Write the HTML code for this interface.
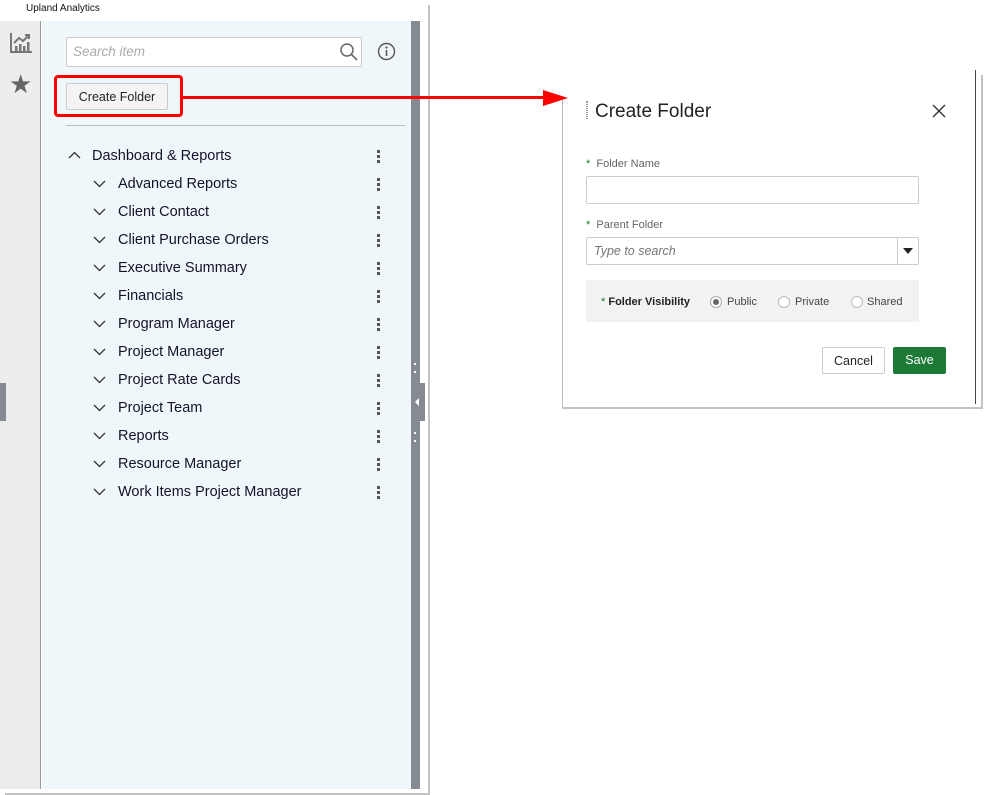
<!DOCTYPE html>
<html><head><meta charset="utf-8"><style>
*{box-sizing:border-box;margin:0;padding:0}
body{width:994px;height:795px;background:#fff;position:relative;overflow:hidden;font-family:"Liberation Sans",sans-serif;color:#222}
.a{position:absolute}
.row{position:absolute;left:0;width:370px;height:28px;font-size:14.5px;color:#141428}
.row .chev{position:absolute;top:6px}
.row .t{position:absolute;top:7px}
.dots{position:absolute;left:311px;top:9px;width:3px}
.dots i{display:block;width:3px;height:3px;background:#555;margin-bottom:2px}
</style></head><body>
<div class="a" style="left:26px;top:3px;font-size:10px;color:#111">Upland Analytics</div>
<div class="a" style="left:428px;top:5px;width:2px;height:790px;background:#c4c4c4"></div>
<div class="a" style="left:5px;top:793px;width:425px;height:2px;background:#c4c4c4"></div>
<div class="a" style="left:0;top:21px;width:41px;height:768px;background:#ededed;border-right:1px solid #999"></div>
<svg class="a" style="left:10px;top:32px" width="23" height="22" viewBox="0 0 23 22"><path d="M1 1V20H22" stroke="#777" stroke-width="2" fill="none"/><rect x="5" y="14" width="2.5" height="5" fill="#777"/><rect x="9" y="12" width="2.5" height="7" fill="#777"/><rect x="13" y="14" width="2.5" height="5" fill="#777"/><rect x="17" y="10" width="2.5" height="9" fill="#777"/><path d="M4 11L9 6L13 9L19 3M15 3H19V7" stroke="#777" stroke-width="2" fill="none"/></svg>
<div class="a" style="left:9px;top:69px;font-size:26px;color:#666;line-height:30px">★</div>
<div class="a" style="left:0;top:383px;width:6px;height:38px;background:#868b93"></div>
<div class="a" style="left:42px;top:21px;width:369px;height:768px;background:#f0f7fb"></div>
<div class="a" style="left:411px;top:21px;width:9px;height:768px;background:#868b93"></div>
<div class="a" style="left:411px;top:383px;width:14px;height:38px;background:#868b93"></div>
<div class="a" style="left:415px;top:398px;width:0;height:0;border:4px solid transparent;border-right-color:#fff;border-left:0"></div>
<div class="a" style="left:414px;top:363px;width:2px;height:10px;border-top:2px dotted #fff;border-bottom:2px dotted #fff"></div>
<div class="a" style="left:414px;top:432px;width:2px;height:10px;border-top:2px dotted #fff;border-bottom:2px dotted #fff"></div>
<div class="a" style="left:66px;top:37px;width:296px;height:30px;background:#fff;border:1px solid #ccc;border-radius:2px"></div>
<div class="a" style="left:73px;top:44px;font-size:13.5px;font-style:italic;color:#aaa">Search item</div>
<svg class="a" style="left:339px;top:42px" width="20" height="20"><circle cx="8" cy="8" r="6" stroke="#666" stroke-width="1.5" fill="none"/><path d="M12.5 12.5L18 18" stroke="#666" stroke-width="1.6"/></svg>
<svg class="a" style="left:377px;top:42px" width="19" height="19"><circle cx="9.5" cy="9.5" r="8" stroke="#555" stroke-width="1.4" fill="none"/><circle cx="9.5" cy="5.5" r="1.1" fill="#555"/><path d="M9.5 8V14" stroke="#555" stroke-width="1.6"/></svg>
<div class="a" style="left:66px;top:83px;width:102px;height:27px;background:#f4f4f4;border:1px solid #ccc;border-radius:2px;font-size:12.5px;text-align:center;line-height:26px;color:#222">Create Folder</div>
<div class="a" style="left:54px;top:75px;width:129px;height:42px;border:3px solid #f00;border-radius:4px"></div>
<div class="a" style="left:183px;top:96px;width:360px;height:3px;background:#f00"></div>
<div class="a" style="left:543px;top:90px;width:0;height:0;border-top:8px solid transparent;border-bottom:8px solid transparent;border-left:25px solid #f00"></div>
<div class="a" style="left:66px;top:125px;width:339px;height:1px;background:#bbb"></div>
<div class="a" style="left:66px;top:141px">
<div class="row" style="top:0"><svg class="chev" style="left:2px;top:10px" width="13" height="8"><path d="M1 7L6.5 1.5L12 7" stroke="#333" stroke-width="1.3" fill="none"/></svg><span class="t" style="left:26px">Dashboard &amp; Reports</span><div class="dots"><i></i><i></i><i></i></div></div>
</div>
<div class="a" style="left:66px;top:169px">
<div class="row" style="top:0"><svg class="chev" style="left:27px;top:11px" width="13" height="8"><path d="M1 1L6.5 6.5L12 1" stroke="#333" stroke-width="1.3" fill="none"/></svg><span class="t" style="left:52px">Advanced Reports</span><div class="dots"><i></i><i></i><i></i></div></div>
<div class="row" style="top:28px"><svg class="chev" style="left:27px;top:11px" width="13" height="8"><path d="M1 1L6.5 6.5L12 1" stroke="#333" stroke-width="1.3" fill="none"/></svg><span class="t" style="left:52px">Client Contact</span><div class="dots"><i></i><i></i><i></i></div></div>
<div class="row" style="top:56px"><svg class="chev" style="left:27px;top:11px" width="13" height="8"><path d="M1 1L6.5 6.5L12 1" stroke="#333" stroke-width="1.3" fill="none"/></svg><span class="t" style="left:52px">Client Purchase Orders</span><div class="dots"><i></i><i></i><i></i></div></div>
<div class="row" style="top:84px"><svg class="chev" style="left:27px;top:11px" width="13" height="8"><path d="M1 1L6.5 6.5L12 1" stroke="#333" stroke-width="1.3" fill="none"/></svg><span class="t" style="left:52px">Executive Summary</span><div class="dots"><i></i><i></i><i></i></div></div>
<div class="row" style="top:112px"><svg class="chev" style="left:27px;top:11px" width="13" height="8"><path d="M1 1L6.5 6.5L12 1" stroke="#333" stroke-width="1.3" fill="none"/></svg><span class="t" style="left:52px">Financials</span><div class="dots"><i></i><i></i><i></i></div></div>
<div class="row" style="top:140px"><svg class="chev" style="left:27px;top:11px" width="13" height="8"><path d="M1 1L6.5 6.5L12 1" stroke="#333" stroke-width="1.3" fill="none"/></svg><span class="t" style="left:52px">Program Manager</span><div class="dots"><i></i><i></i><i></i></div></div>
<div class="row" style="top:168px"><svg class="chev" style="left:27px;top:11px" width="13" height="8"><path d="M1 1L6.5 6.5L12 1" stroke="#333" stroke-width="1.3" fill="none"/></svg><span class="t" style="left:52px">Project Manager</span><div class="dots"><i></i><i></i><i></i></div></div>
<div class="row" style="top:196px"><svg class="chev" style="left:27px;top:11px" width="13" height="8"><path d="M1 1L6.5 6.5L12 1" stroke="#333" stroke-width="1.3" fill="none"/></svg><span class="t" style="left:52px">Project Rate Cards</span><div class="dots"><i></i><i></i><i></i></div></div>
<div class="row" style="top:224px"><svg class="chev" style="left:27px;top:11px" width="13" height="8"><path d="M1 1L6.5 6.5L12 1" stroke="#333" stroke-width="1.3" fill="none"/></svg><span class="t" style="left:52px">Project Team</span><div class="dots"><i></i><i></i><i></i></div></div>
<div class="row" style="top:252px"><svg class="chev" style="left:27px;top:11px" width="13" height="8"><path d="M1 1L6.5 6.5L12 1" stroke="#333" stroke-width="1.3" fill="none"/></svg><span class="t" style="left:52px">Reports</span><div class="dots"><i></i><i></i><i></i></div></div>
<div class="row" style="top:280px"><svg class="chev" style="left:27px;top:11px" width="13" height="8"><path d="M1 1L6.5 6.5L12 1" stroke="#333" stroke-width="1.3" fill="none"/></svg><span class="t" style="left:52px">Resource Manager</span><div class="dots"><i></i><i></i><i></i></div></div>
<div class="row" style="top:308px"><svg class="chev" style="left:27px;top:11px" width="13" height="8"><path d="M1 1L6.5 6.5L12 1" stroke="#333" stroke-width="1.3" fill="none"/></svg><span class="t" style="left:52px">Work Items Project Manager</span><div class="dots"><i></i><i></i><i></i></div></div>
</div>
<div class="a" style="left:562px;top:100px;width:1px;height:308px;background:#bbb"></div>
<div class="a" style="left:562px;top:407px;width:421px;height:2px;background:#c4c4c4"></div>
<div class="a" style="left:975px;top:70px;width:1px;height:334px;background:#444"></div>
<div class="a" style="left:981px;top:75px;width:2px;height:334px;background:#c4c4c4"></div>
<div class="a" style="left:586px;top:101px;width:2px;height:18px;border-left:1px dotted #999;border-right:1px dotted #999"></div>
<div class="a" style="left:595px;top:101px;font-size:19px;color:#222">Create Folder</div>
<svg class="a" style="left:932px;top:104px" width="14" height="14"><path d="M1 1L13 13M13 1L1 13" stroke="#333" stroke-width="1.4"/></svg>
<div class="a" style="left:586px;top:158px;font-size:11px;color:#666"><span style="color:#1e7a36">*</span>&nbsp; Folder Name</div>
<div class="a" style="left:586px;top:176px;width:333px;height:28px;border:1px solid #ccc;border-radius:2px;background:#fff"></div>
<div class="a" style="left:586px;top:219px;font-size:11px;color:#666"><span style="color:#1e7a36">*</span>&nbsp; Parent Folder</div>
<div class="a" style="left:586px;top:237px;width:333px;height:28px;border:1px solid #ccc;border-radius:2px;background:#fff"></div>
<div class="a" style="left:897px;top:238px;width:1px;height:26px;background:#ccc"></div>
<div class="a" style="left:903px;top:248px;border-left:5px solid transparent;border-right:5px solid transparent;border-top:6px solid #222"></div>
<div class="a" style="left:594px;top:244px;font-size:12.5px;font-style:italic;color:#777">Type to search</div>
<div class="a" style="left:586px;top:280px;width:333px;height:42px;background:#f2f2f2"></div>
<div class="a" style="left:601px;top:296px;font-size:11px;color:#222"><span style="color:#1e7a36">*</span> <b>Folder Visibility</b></div>
<div class="a" style="left:710px;top:296px;width:12px;height:12px;border:1px solid #aaa;border-radius:50%;background:#fff"></div>
<div class="a" style="left:713px;top:299px;width:6px;height:6px;border-radius:50%;background:#666"></div>
<div class="a" style="left:727px;top:296px;font-size:11px;color:#444">Public</div>
<div class="a" style="left:778px;top:296px;width:12px;height:12px;border:1px solid #bbb;border-radius:50%;background:#fff"></div>
<div class="a" style="left:795px;top:296px;font-size:11px;color:#444">Private</div>
<div class="a" style="left:851px;top:296px;width:12px;height:12px;border:1px solid #bbb;border-radius:50%;background:#fff"></div>
<div class="a" style="left:867px;top:296px;font-size:11px;color:#444">Shared</div>
<div class="a" style="left:822px;top:347px;width:63px;height:27px;border:1px solid #ccc;border-radius:2px;background:#fff;font-size:12.5px;text-align:center;line-height:26px;color:#222">Cancel</div>
<div class="a" style="left:893px;top:347px;width:53px;height:27px;border-radius:2px;background:#1d7a35;font-size:12.5px;text-align:center;line-height:27px;color:#fff">Save</div>
</body></html>
